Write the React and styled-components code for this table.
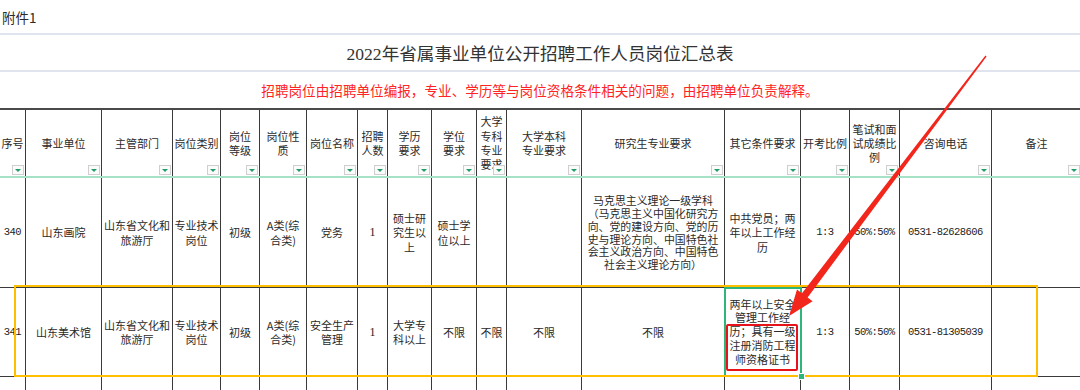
import React from "react";
import styled, { createGlobalStyle } from "styled-components";

const GlobalStyle = createGlobalStyle`
  html, body {
    margin: 0;
    padding: 0;
    background: #fff;
  }
  body {
    font-family: "Noto Sans CJK SC", sans-serif;
  }
`;

const COLS = [26, 76, 71, 48, 39, 47, 51, 30, 44, 45, 30, 75, 143, 76, 49, 50, 92, 90];

const Page = styled.div`
  position: relative;
  width: 1080px;
  height: 390px;
  overflow: hidden;
  background: #fff;
`;

const Band = styled.div`
  box-sizing: border-box;
  height: ${p => p.h}px;
  display: flex;
  align-items: center;
  justify-content: ${p => p.align || "center"};
  padding: 0 2px;
  border-bottom: 2px solid ${p => p.line || "#dfe4ee"};
`;

const Attachment = styled.span`
  font-size: 13.5px;
  color: #2a2a2a;
`;

const Title = styled.h1`
  margin: 0;
  font-family: "Liberation Serif", "Noto Sans CJK SC", serif;
  font-weight: 400;
  font-size: 17.6px;
  color: #333;
`;

const Notice = styled.p`
  margin: 0;
  font-size: 13.6px;
  color: #ff2424;
`;

const Row = styled.div`
  box-sizing: border-box;
  display: grid;
  grid-template-columns: ${COLS.map(w => `${w}px`).join(" ")};
  height: ${p => p.h}px;
  border-bottom: ${p => p.line || "1px solid #3a3a3a"};
`;

const Cell = styled.div`
  position: relative;
  box-sizing: border-box;
  display: flex;
  flex-direction: column;
  align-items: center;
  justify-content: center;
  padding: 0 1px;
  border-right: 1px solid #3a3a3a;
  overflow: hidden;
  white-space: nowrap;
  text-align: center;
  font-size: ${p => p.fs || 11}px;
  line-height: ${p => p.lh || 14.3}px;
  color: #2a2a2a;
  outline: ${p => (p.selected ? "2px solid #2eb67a" : "none")};
  outline-offset: -1px;
`;

const Line = styled.span`
  display: block;
  height: ${p => p.lh}px;
`;

const Mono = styled.span`
  font-family: "Liberation Mono", monospace;
  font-size: 10.5px;
  letter-spacing: -0.55px;
  color: #222;
`;

const Serif = styled.span`
  font-family: "Liberation Serif", serif;
  font-size: 12px;
  color: #222;
`;

const Filter = styled.span`
  position: absolute;
  right: 1px;
  bottom: 1px;
  box-sizing: border-box;
  width: 12px;
  height: 10px;
  display: flex;
  align-items: center;
  justify-content: center;
  border: 1px solid #cfcfcf;
  background: #fbfbfb;

  &::after {
    content: "";
    border-left: 3px solid transparent;
    border-right: 3px solid transparent;
    border-top: 3px solid #1f9e6b;
  }
`;

const RowMark = styled.div`
  position: absolute;
  left: 14px;
  top: 285px;
  width: 1024px;
  height: 92px;
  box-sizing: border-box;
  border: 2px solid #ffbf00;
  pointer-events: none;
`;

const NoteMark = styled.div`
  position: absolute;
  left: 726px;
  top: 324px;
  width: 72px;
  height: 47px;
  box-sizing: border-box;
  border: 2px solid #e8121b;
  border-radius: 2px;
  pointer-events: none;
`;

const Handle = styled.div`
  position: absolute;
  left: 798px;
  top: 373px;
  width: 5px;
  height: 5px;
  background: #2eb67a;
  border: 1px solid #fff;
  pointer-events: none;
`;

const Overlay = styled.svg`
  position: absolute;
  left: 0;
  top: 0;
  pointer-events: none;
`;

const headers = [
  ["序号"],
  ["事业单位"],
  ["主管部门"],
  ["岗位类别"],
  ["岗位", "等级"],
  ["岗位性", "质"],
  ["岗位名称"],
  ["招聘", "人数"],
  ["学历", "要求"],
  ["学位", "要求"],
  ["大学", "专科", "专业", "要求"],
  ["大学本科", "专业要求"],
  ["研究生专业要求"],
  ["其它条件要求"],
  ["开考比例"],
  ["笔试和面", "试成绩比", "例"],
  ["咨询电话"],
  ["备注"],
];

const m = t => ({ mono: t });
const s = t => ({ serif: t });

const rows = [
  {
    h: 110,
    cells: [
      m("340"),
      ["山东画院"],
      ["山东省文化和", "旅游厅"],
      ["专业技术", "岗位"],
      ["初级"],
      ["A类(综", "合类)"],
      ["党务"],
      s("1"),
      ["硕士研", "究生以", "上"],
      ["硕士学", "位以上"],
      [],
      [],
      {
        lh: 12.9,
        fs: 10.9,
        lines: [
          "马克思主义理论一级学科",
          "（马克思主义中国化研究方",
          "向、党的建设方向、党的历",
          "史与理论方向、中国特色社",
          "会主义政治方向、中国特色",
          "社会主义理论方向）",
        ],
      },
      ["中共党员；两", "年以上工作经", "历"],
      m("1:3"),
      m("50%:50%"),
      m("0531-82628606"),
      [],
    ],
  },
  {
    h: 89,
    cells: [
      m("341"),
      ["山东美术馆"],
      ["山东省文化和", "旅游厅"],
      ["专业技术", "岗位"],
      ["初级"],
      ["A类(综", "合类)"],
      ["安全生产", "管理"],
      s("1"),
      ["大学专", "科以上"],
      ["不限"],
      ["不限"],
      ["不限"],
      ["不限"],
      {
        lh: 13.7,
        selected: true,
        lines: ["两年以上安全", "管理工作经", "历；具有一级", "注册消防工程", "师资格证书"],
      },
      m("1:3"),
      m("50%:50%"),
      m("0531-81305039"),
      [],
    ],
  },
  { h: 30, cells: COLS.map(() => []) },
];

const renderCell = (c, i) => {
  if (Array.isArray(c)) {
    return (
      <Cell key={i}>
        {c.map(t => (
          <Line key={t} lh={14.3}>{t}</Line>
        ))}
      </Cell>
    );
  }
  if (c.mono) {
    return (
      <Cell key={i}>
        <Mono>{c.mono}</Mono>
      </Cell>
    );
  }
  if (c.serif) {
    return (
      <Cell key={i}>
        <Serif>{c.serif}</Serif>
      </Cell>
    );
  }
  return (
    <Cell key={i} lh={c.lh} fs={c.fs} selected={c.selected}>
      {c.lines.map(t => (
        <Line key={t} lh={c.lh}>{t}</Line>
      ))}
    </Cell>
  );
};

const Arrow = () => (
  <Overlay width="1080" height="390" viewBox="0 0 1080 390">
    <polygon
      fill="#f3261c"
      points="986.6,56.5 807.6,297.4 812.6,301.2 789,316 797,289.4 802,293.2 985.4,55.5"
    />
  </Overlay>
);

const App = () => {
  return (
    <Page>
      <GlobalStyle />
      <Band h={35} align="flex-start">
        <Attachment>附件1</Attachment>
      </Band>
      <Band h={37}>
        <Title>2022年省属事业单位公开招聘工作人员岗位汇总表</Title>
      </Band>
      <Band h={38} line="#4a4a4a">
        <Notice>招聘岗位由招聘单位编报，专业、学历等与岗位资格条件相关的问题，由招聘单位负责解释。</Notice>
      </Band>

      <Row h={68} line="2px solid #a6e3c6">
        {headers.map((lines, i) => (
          <Cell key={i}>
            {lines.map(t => (
              <Line key={t} lh={14.3}>{t}</Line>
            ))}
            <Filter />
          </Cell>
        ))}
      </Row>

      {rows.map((r, i) => (
        <Row key={i} h={r.h}>
          {r.cells.map(renderCell)}
        </Row>
      ))}

      <RowMark />
      <NoteMark />
      <Handle />
      <Arrow />
    </Page>
  );
};

export default App;
